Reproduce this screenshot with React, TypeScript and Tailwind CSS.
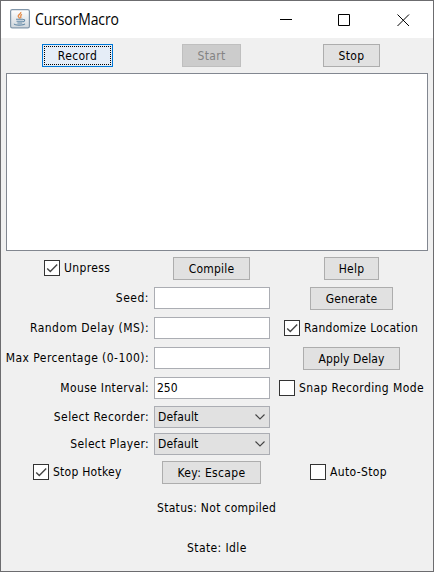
import type { ReactNode } from "react";

function Button({ children, className = "" }: { children: ReactNode; className?: string }) {
  return (
    <button className={`flex h-[23px] shrink-0 items-center justify-center border border-[#adadad] bg-[#e1e1e1] whitespace-nowrap ${className}`}>
      {children}
    </button>
  );
}

function Check({ label, checked = false, className = "" }: { label: string; checked?: boolean; className?: string }) {
  return (
    <label className={`flex h-[22px] items-center gap-1 whitespace-nowrap ${className}`}>
      <span className="size-4 shrink-0 border border-[#333] bg-white">
        {checked && (
          <svg viewBox="0 0 14 14" className="size-[14px]" fill="none" stroke="#444" strokeWidth="1.4">
            <path d="M2.2 7.5 5.3 10.6 12.2 3.6" />
          </svg>
        )}
      </span>
      <span>{label}</span>
    </label>
  );
}

function Row({ children, className = "" }: { children: ReactNode; className?: string }) {
  return (
    <div className={`grid grid-cols-[143px_116px_153px] items-start gap-x-[5px] pl-[5px] ${className}`}>{children}</div>
  );
}

function Label({ children, className = "" }: { children: ReactNode; className?: string }) {
  return <span className={`flex h-[22px] items-center justify-end whitespace-nowrap ${className}`}>{children}</span>;
}

function Field({ value = "" }: { value?: string }) {
  return <div className="flex h-[22px] items-center border border-[#abadb3] bg-white pl-[2px] tracking-normal">{value}</div>;
}

function Select({ value }: { value: string }) {
  return (
    <div className="flex h-[22px] items-center justify-between border border-[#abadb3] bg-[#e1e1e1] pr-1 pl-[3px] tracking-[0.15px]">
      <span>{value}</span>
      <svg viewBox="0 0 10 6" className="h-[6px] w-[10px]" fill="none" stroke="#444" strokeWidth="1.1">
        <path d="M.5 .5 5 5 9.5 .5" />
      </svg>
    </div>
  );
}

function JavaIcon() {
  return (
    <svg viewBox="0 0 20 20" className="-mt-px size-5" fill="none">
      <defs>
        <linearGradient id="tile" x1="0" y1="0" x2="0" y2="1">
          <stop stopColor="#fff" />
          <stop offset="1" stopColor="#cfd6dc" />
        </linearGradient>
      </defs>
      <rect x=".6" y=".6" width="18.8" height="18.2" rx="1.6" fill="url(#tile)" stroke="#8297aa" strokeWidth="1.2" />
      <path d="M10.8 3C11.4 5 7.6 5.7 8.2 7.4 8.5 8.3 9.7 8.5 9.4 9.6M12 5.3C9.2 6.6 11.8 7.6 10.5 9.3" stroke="#e58b48" strokeWidth="1.3" />
      <path d="M6 10.3h7M6.5 12.3h6.3M7.4 14h4.8M13 10.5c2.5-.5 2 2-.3 2.5M4.4 14.8c-.8 1.8 9.5 1.8 10.5 0" stroke="#6288a6" strokeWidth="1.1" />
    </svg>
  );
}

export default function App() {
  return (
    <div className="flex h-[572px] w-[434px] flex-col overflow-hidden border border-[#6c6c6f] bg-[#f0f0f0] font-['DejaVu_Sans_Condensed','DejaVu_Sans',sans-serif] text-[12px] leading-[14px] tracking-[0.35px] text-black">
      <header className="flex h-[37px] shrink-0 items-center bg-white pl-[9px]">
        <JavaIcon />
        <span className="-mt-[2px] ml-[5px] origin-left scale-x-[0.9] font-['Open_Sans',sans-serif] text-[15.5px] leading-5 tracking-[-0.1px]">CursorMacro</span>
        <svg viewBox="0 0 130 12" className="ml-auto mr-[23px] h-3 w-[130px]" fill="none" stroke="#000">
          <path d="M0 5.5h12M58.5 .5h11v11h-11zM117.5 .5l11.5 11.5M129 .5l-11.5 11.5" />
        </svg>
      </header>

      <Row className="mt-[6px]">
        <Button className="w-[71px] justify-self-center !border-[#0078d7] !bg-[#e5edf7] p-px">
          <span className="flex h-full w-full items-center justify-center border border-dotted border-black">Record</span>
        </Button>
        <Button className="ml-[28px] w-[59px] !border-[#bfbfbf] !bg-[#ccc] text-[#838383]">Start</Button>
        <Button className="w-[57px] justify-self-center">Stop</Button>
      </Row>
      <div className="mx-[5px] mt-[6px] h-[178px] w-[422px] shrink-0 border border-[#828790] bg-white" />

      <Row className="mt-[6px]">
        <Check label="Unpress" checked className="ml-[38px]" />
        <Button className="ml-[19px] w-[77px] tracking-[0.2px]">Compile</Button>
        <Button className="w-[55px] justify-self-center tracking-[0.2px]">Help</Button>
      </Row>
      <Row className="mt-[7px]">
        <Label className="tracking-[0.5px]">Seed:</Label>
        <Field />
        <Button className="w-[83px] justify-self-center tracking-[0.15px]">Generate</Button>
      </Row>
      <Row className="mt-[7px]">
        <Label className="tracking-[0.46px]">Random Delay (MS):</Label>
        <Field />
        <Check label="Randomize Location" checked className="ml-[9px] tracking-[0.28px]" />
      </Row>
      <Row className="mt-[8px]">
        <Label className="tracking-[0.43px]">Max Percentage (0-100):</Label>
        <Field />
        <Button className="w-[97px] justify-self-center tracking-[0.1px]">Apply Delay</Button>
      </Row>
      <Row className="mt-[7px]">
        <Label>Mouse Interval:</Label>
        <Field value="250" />
        <Check label="Snap Recording Mode" className="ml-[4px] tracking-[0.4px]" />
      </Row>
      <Row className="mt-[7px]">
        <Label className="tracking-[0.42px]">Select Recorder:</Label>
        <Select value="Default" />
      </Row>
      <Row className="mt-[5px]">
        <Label>Select Player:</Label>
        <Select value="Default" />
      </Row>
      <Row className="mt-[6px]">
        <Check label="Stop Hotkey" checked className="ml-[27px] tracking-[0.25px]" />
        <Button className="ml-[8px] w-[99px]">Key: Escape</Button>
        <Check label="Auto-Stop" className="ml-[35px]" />
      </Row>
      <p className="mt-[17px] ml-[156px] tracking-[0.3px]">Status: Not compiled</p>
      <p className="mt-[26px] ml-[186px] tracking-[0.4px]">State: Idle</p>
    </div>
  );
}
